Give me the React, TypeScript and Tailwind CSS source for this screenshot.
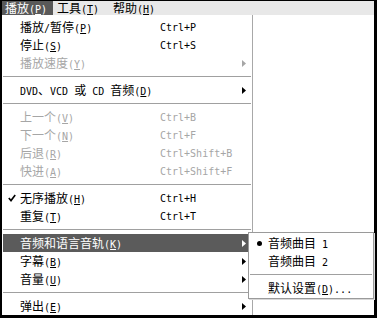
import React from 'react';

type Item = {
  label?: string;
  keys?: string;
  disabled?: boolean;
  checked?: boolean;
  sub?: boolean;
  active?: boolean;
  sep?: boolean;
};

const items: Item[] = [
  { label: '播放/暂停(&P)', keys: 'Ctrl+P' },
  { label: '停止(&S)', keys: 'Ctrl+S' },
  { label: '播放速度(&Y)', disabled: true, sub: true },
  { sep: true },
  { label: 'DVD、VCD 或 CD 音频(&D)', sub: true },
  { sep: true },
  { label: '上一个(&V)', keys: 'Ctrl+B', disabled: true },
  { label: '下一个(&N)', keys: 'Ctrl+F', disabled: true },
  { label: '后退(&R)', keys: 'Ctrl+Shift+B', disabled: true },
  { label: '快进(&A)', keys: 'Ctrl+Shift+F', disabled: true },
  { sep: true },
  { label: '无序播放(&H)', keys: 'Ctrl+H', checked: true },
  { label: '重复(&T)', keys: 'Ctrl+T' },
  { sep: true },
  { label: '音频和语言音轨(&K)', sub: true, active: true },
  { label: '字幕(&B)', sub: true },
  { label: '音量(&U)', sub: true },
  { sep: true },
  { label: '弹出(&E)', sub: true },
];

// latin runs get the narrow mono face, CJK runs stay 12px
function Label({ text }: { text: string }) {
  return (
    <span className="whitespace-pre leading-none">
      {text
        .split(/([\x20-\x7e]+)/)
        .filter(Boolean)
        .map((run, i) =>
          /^[\x20-\x7e]+$/.test(run) ? (
            <span key={i} className="font-['DejaVu_Sans_Mono',monospace] text-[10px]">
              {run.split(/&(.)/).map((p, j) => (j % 2 ? <u key={j}>{p}</u> : p))}
            </span>
          ) : (
            <span key={i}>{run}</span>
          )
        )}
    </span>
  );
}

function Arrow({ color }: { color: string }) {
  return (
    <svg width="4" height="7" viewBox="0 0 4 7">
      <polygon points="0,0 4,3.5 0,7" fill={color} />
    </svg>
  );
}

function Check() {
  return (
    <svg width="8" height="8" viewBox="0 0 8 8">
      <path d="M0.8 4 L3 6.6 L7.2 1" stroke="#000" strokeWidth="1.6" fill="none" />
    </svg>
  );
}

export default function App() {
  return (
    <div className="w-[377px] h-[318px] bg-black pt-[1px] pl-[2px] pr-[3px] pb-[3px] font-['Noto_Sans_CJK_SC',sans-serif] text-[12px] text-black">
      {/* menu bar */}
      <div className="h-[14px] bg-[#e8e8e8] flex items-center">
        <div className="h-full w-[51px] bg-[#595959] text-white flex items-center pl-[3px]">
          <Label text="播放(&P)" />
        </div>
        <div className="h-full w-[60px] flex items-center pl-[4px]">
          <Label text="工具(&T)" />
        </div>
        <div className="h-full flex items-center">
          <Label text="帮助(&H)" />
        </div>
      </div>

      <div className="relative flex h-[300px] bg-white">
        {/* main menu */}
        <div className="w-[251px] border-r border-[#a8a8a8] pt-[3px] px-[1px]">
          {items.map((it, i) =>
            it.sep ? (
              <div key={i} className="h-[9px] flex items-center">
                <div className="h-px w-full bg-[#a0a0a0]" />
              </div>
            ) : (
              <div
                key={i}
                className={
                  'h-[18px] flex items-center ' +
                  (it.active ? 'bg-[#5b5b5b] text-white' : it.disabled ? 'text-[#a6a6a6]' : '')
                }
              >
                <div className="w-[17px] flex justify-center">{it.checked && <Check />}</div>
                <div className="w-[140px]">
                  <Label text={it.label!} />
                </div>
                <div className="w-[80px] font-['DejaVu_Sans_Mono',monospace] text-[10px] whitespace-pre">
                  {it.keys}
                </div>
                <div className="pl-[2px] flex items-center">
                  {it.sub && <Arrow color={it.active ? '#fff' : it.disabled ? '#a6a6a6' : '#000'} />}
                </div>
              </div>
            )
          )}
        </div>

        {/* submenu popup */}
        <div className="absolute left-[246px] top-[217px] w-[126px] h-[67px] bg-white border border-[#9a9a9a] py-[1px] shadow-[1px_1px_0_#d8d8d8]">
          <div className="h-[18px] flex items-center">
            <div className="w-[19px] pl-[8px] flex items-center">
              <div className="w-[5px] h-[5px] rounded-full bg-black" />
            </div>
            <Label text="音频曲目 1" />
          </div>
          <div className="h-[18px] flex items-center pl-[19px]">
            <Label text="音频曲目 2" />
          </div>
          <div className="h-[9px] flex items-center px-[1px]">
            <div className="h-px w-full bg-[#a0a0a0]" />
          </div>
          <div className="h-[18px] flex items-center pl-[19px]">
            <Label text="默认设置(&D)..." />
          </div>
        </div>
      </div>
    </div>
  );
}
